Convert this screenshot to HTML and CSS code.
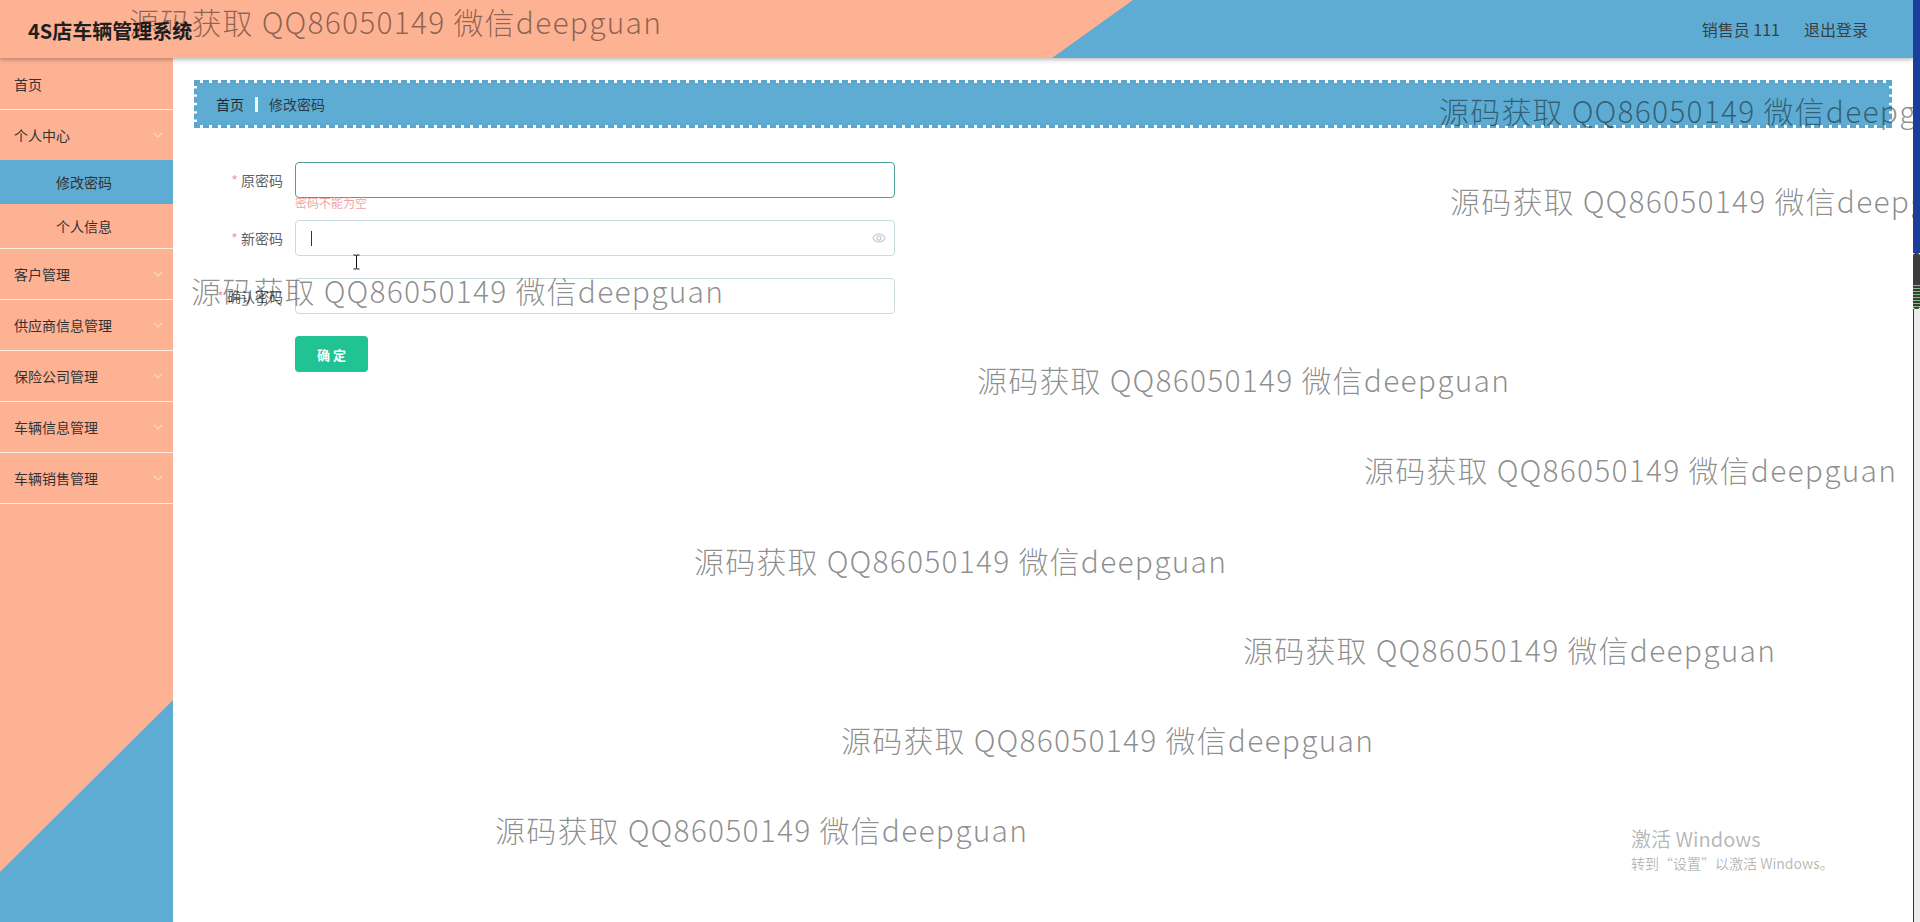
FILE: index.html
```html
<!DOCTYPE html>
<html lang="zh-CN">
<head>
    <meta charset="UTF-8">
    <meta name="viewport" content="width=device-width, initial-scale=1.0">
    <title>4S店车辆管理系统</title>
    <link rel="stylesheet" href="styles.css">
</head>
<body>
    <div class="app">
        <header class="topbar">
            <div class="brand">4S店车辆管理系统</div>
            <div class="user">
                <span>销售员 111</span>
                <span class="logout">退出登录</span>
            </div>
        </header>

        <div class="layout">
            <aside class="sidebar">
                <ul class="menu">
                    <li class="menu-item">首页</li>
                    <li class="submenu">
                        <div class="menu-item has-arrow">个人中心
                            <svg class="arrow" viewBox="0 0 10 6"><path d="M1 1l4 4 4-4"/></svg>
                        </div>
                        <ul class="sub-list">
                            <li class="sub-item active">修改密码</li>
                            <li class="sub-item">个人信息</li>
                        </ul>
                    </li>
                    <li class="menu-item has-arrow">客户管理
                        <svg class="arrow" viewBox="0 0 10 6"><path d="M1 1l4 4 4-4"/></svg>
                    </li>
                    <li class="menu-item has-arrow">供应商信息管理
                        <svg class="arrow" viewBox="0 0 10 6"><path d="M1 1l4 4 4-4"/></svg>
                    </li>
                    <li class="menu-item has-arrow">保险公司管理
                        <svg class="arrow" viewBox="0 0 10 6"><path d="M1 1l4 4 4-4"/></svg>
                    </li>
                    <li class="menu-item has-arrow">车辆信息管理
                        <svg class="arrow" viewBox="0 0 10 6"><path d="M1 1l4 4 4-4"/></svg>
                    </li>
                    <li class="menu-item has-arrow">车辆销售管理
                        <svg class="arrow" viewBox="0 0 10 6"><path d="M1 1l4 4 4-4"/></svg>
                    </li>
                </ul>
            </aside>

            <main class="main">
                <div class="crumb">
                    <span class="crumb-home">首页</span>
                    <span class="crumb-sep"></span>
                    <span class="crumb-current">修改密码</span>
                </div>

                <div class="pwd-form">
                    <div class="form-item">
                        <label class="form-label"><i>*</i> 原密码</label>
                        <div class="form-control">
                            <div class="input focus"></div>
                            <div class="form-error">密码不能为空</div>
                        </div>
                    </div>
                    <div class="form-item">
                        <label class="form-label"><i>*</i> 新密码</label>
                        <div class="form-control">
                            <div class="input">
                                <span class="caret"></span>
                                <svg class="eye" viewBox="0 0 16 16"><path d="M1 8s2.6-4.6 7-4.6S15 8 15 8s-2.6 4.6-7 4.6S1 8 1 8z"/><circle cx="8" cy="8" r="2.4"/></svg>
                            </div>
                        </div>
                    </div>
                    <div class="form-item">
                        <label class="form-label"><i>*</i> 确认密码</label>
                        <div class="form-control">
                            <div class="input"></div>
                        </div>
                    </div>
                    <div class="form-item">
                        <div class="form-label"></div>
                        <button class="btn-ok" type="button">确 定</button>
                    </div>
                </div>
            </main>
        </div>

        <!-- screenshot overlays -->
        <svg class="ibeam" viewBox="0 0 9 16"><path d="M1.5 1h2.5l0.5 0.6 0.5-0.6h2.5M4.5 1.6v12.8M1.5 15h2.5l0.5-0.6 0.5 0.6h2.5"/></svg>
        <div class="wm wm1">源码获取 QQ86050149 微信deepguan</div>
        <div class="wm wm2">源码获取 QQ86050149 微信deepguan</div>
        <div class="wm wm3">源码获取 QQ86050149 微信deepguan</div>
        <div class="wm wm4">源码获取 QQ86050149 微信deepguan</div>
        <div class="wm wm5">源码获取 QQ86050149 微信deepguan</div>
        <div class="wm wm6">源码获取 QQ86050149 微信deepguan</div>
        <div class="wm wm7">源码获取 QQ86050149 微信deepguan</div>
        <div class="wm wm8">源码获取 QQ86050149 微信deepguan</div>
        <div class="wm wm9">源码获取 QQ86050149 微信deepguan</div>
        <div class="wm wm10">源码获取 QQ86050149 微信deepguan</div>
        <div class="activate">
            <div class="activate-title">激活 Windows</div>
            <div class="activate-sub">转到“设置”以激活 Windows。</div>
        </div>
    </div>

    <div class="edge">
        <div class="edge-top"></div>
        <div class="edge-bar"></div>
        <div class="edge-rest"></div>
    </div>
</body>
</html>
```

FILE: styles.css
```css
body {
    margin: 0;
    padding: 0;
    display: flex;
    height: 922px;
    overflow: hidden;
    font-family: "Noto Sans CJK SC", "Noto Sans", sans-serif;
    background-color: #fff;
    color: #333;
}

ul {
    list-style: none;
    margin: 0;
    padding: 0;
}

.app {
    flex: 1;
    display: flex;
    flex-direction: column;
    position: relative;
    overflow: hidden;
}

/* Header */
.topbar {
    position: relative;
    z-index: 2;
    height: 58px;
    flex-shrink: 0;
    display: flex;
    align-items: center;
    justify-content: space-between;
    padding: 0 45px 0 28px;
    background-color: #feb294;
    box-shadow: 0 2px 4px rgba(0, 0, 0, 0.25);
}

.topbar::before {
    content: "";
    position: absolute;
    top: 0;
    left: 0;
    right: 0;
    bottom: 0;
    background-color: #5eacd3;
    clip-path: polygon(1133px 0, 100% 0, 100% 100%, 1052px 100%);
}

.brand {
    position: relative;
    font-size: 20px;
    font-weight: bold;
    color: #1f1f1f;
    margin-top: 3px;
}

.user {
    position: relative;
    display: flex;
    gap: 24px;
    font-size: 16px;
    color: #3a3f44;
}

/* Sidebar */
.layout {
    flex: 1;
    display: flex;
    min-height: 0;
}

.sidebar {
    position: relative;
    width: 173px;
    flex-shrink: 0;
    background-color: #feb294;
}

.sidebar::after {
    content: "";
    position: absolute;
    top: 0;
    left: 0;
    right: 0;
    bottom: 0;
    background-color: #5eacd3;
    clip-path: polygon(100% 642px, 100% 100%, 0 100%, 0 814px);
}

.menu {
    position: relative;
    z-index: 1;
    padding-top: 1px;
}

.menu-item {
    height: 50px;
    line-height: 50px;
    padding: 0 10px 0 14px;
    font-size: 14px;
    color: #333;
    border-bottom: 1px solid rgba(255, 255, 255, 0.75);
}

.has-arrow {
    display: flex;
    align-items: center;
    justify-content: space-between;
}

.submenu > .menu-item {
    border-bottom: none;
}

.sub-list {
    border-bottom: 1px solid rgba(255, 255, 255, 0.75);
}

.arrow {
    width: 10px;
    height: 6px;
    fill: none;
    stroke: #fcd6c6;
    stroke-width: 1.2;
}

.sub-item {
    height: 44px;
    line-height: 44px;
    padding-left: 56px;
    font-size: 14px;
    color: #333;
}

.sub-item.active {
    background-color: #5eacd3;
}

/* Main */
.main {
    flex: 1;
    padding: 22px 21px 0 21px;
}

.crumb {
    height: 42px;
    display: flex;
    align-items: center;
    padding: 0 19px;
    font-size: 14px;
    background-color: #5eacd3;
    background-clip: padding-box;
    border: 3px dashed #5ca6cc;
}

.crumb-home {
    color: #1e2a33;
}

.crumb-sep {
    width: 3px;
    height: 15px;
    margin: 0 11px;
    background-color: #eef6fb;
}

.crumb-current {
    color: #2e3b44;
}

/* Form */
.pwd-form {
    margin-top: 34px;
}

.form-item {
    display: flex;
    align-items: flex-start;
    margin-bottom: 22px;
}

.form-label {
    width: 101px;
    flex-shrink: 0;
    box-sizing: border-box;
    padding-right: 12px;
    line-height: 36px;
    text-align: right;
    font-size: 14px;
    color: #606266;
}

.form-label i {
    font-style: normal;
    color: #f39a9a;
}

.form-control {
    position: relative;
}

.input {
    width: 600px;
    height: 36px;
    box-sizing: border-box;
    padding: 0 15px;
    display: flex;
    align-items: center;
    justify-content: space-between;
    border: 1px solid #c9d9dc;
    border-radius: 4px;
    background-color: #fff;
}

.input.focus {
    border-color: #4f9f9c;
}

.caret {
    width: 1px;
    height: 15px;
    background-color: #333;
}

.eye {
    width: 14px;
    height: 14px;
    margin-right: -7px;
    fill: none;
    stroke: #c0c4cc;
    stroke-width: 1.2;
}

.form-error {
    position: absolute;
    top: calc(100% - 1px);
    left: 0;
    font-size: 12px;
    line-height: 12px;
    color: #f3a3a3;
}

.btn-ok {
    width: 73px;
    height: 36px;
    border: none;
    border-radius: 4px;
    background-color: #1fc394;
    color: #fff;
    font-family: inherit;
    font-size: 13px;
    font-weight: bold;
    cursor: pointer;
}

/* Screenshot overlays */
.ibeam {
    position: absolute;
    left: 352px;
    top: 254px;
    width: 9px;
    height: 16px;
    fill: none;
    stroke: #111;
    stroke-width: 1;
}

.wm {
    position: absolute;
    z-index: 5;
    white-space: nowrap;
    font-size: 30px;
    line-height: 36px;
    font-weight: 300;
    letter-spacing: 1.2px;
    color: rgba(0, 0, 0, 0.46);
    pointer-events: none;
}

.wm1 { left: 129px; top: 3px; }
.wm2 { left: 1439px; top: 92px; }
.wm3 { left: 1450px; top: 182px; }
.wm4 { left: 191px; top: 272px; }
.wm5 { left: 977px; top: 361px; }
.wm6 { left: 1364px; top: 451px; }
.wm7 { left: 694px; top: 542px; }
.wm8 { left: 1243px; top: 631px; }
.wm9 { left: 841px; top: 721px; }
.wm10 { left: 495px; top: 811px; }

.activate {
    position: absolute;
    left: 1631px;
    top: 826px;
    color: rgba(0, 0, 0, 0.3);
}

.activate-title {
    font-size: 20px;
    line-height: 26px;
}

.activate-sub {
    font-size: 14px;
    line-height: 22px;
}

/* Right window edge */
.edge {
    width: 7px;
    flex-shrink: 0;
    display: flex;
    flex-direction: column;
}

.edge-top {
    height: 253px;
    background-color: #1b3d9b;
}

.edge-bar {
    height: 56px;
    border-radius: 3px;
    background: repeating-linear-gradient(#3c3c3c 0 2px, #7fc47a 2px 3px) bottom / 100% 26px no-repeat, #3c3c3c;
}

.edge-rest {
    flex: 1;
    background-color: #ececec;
    border-left: 1px solid #333;
}
```
